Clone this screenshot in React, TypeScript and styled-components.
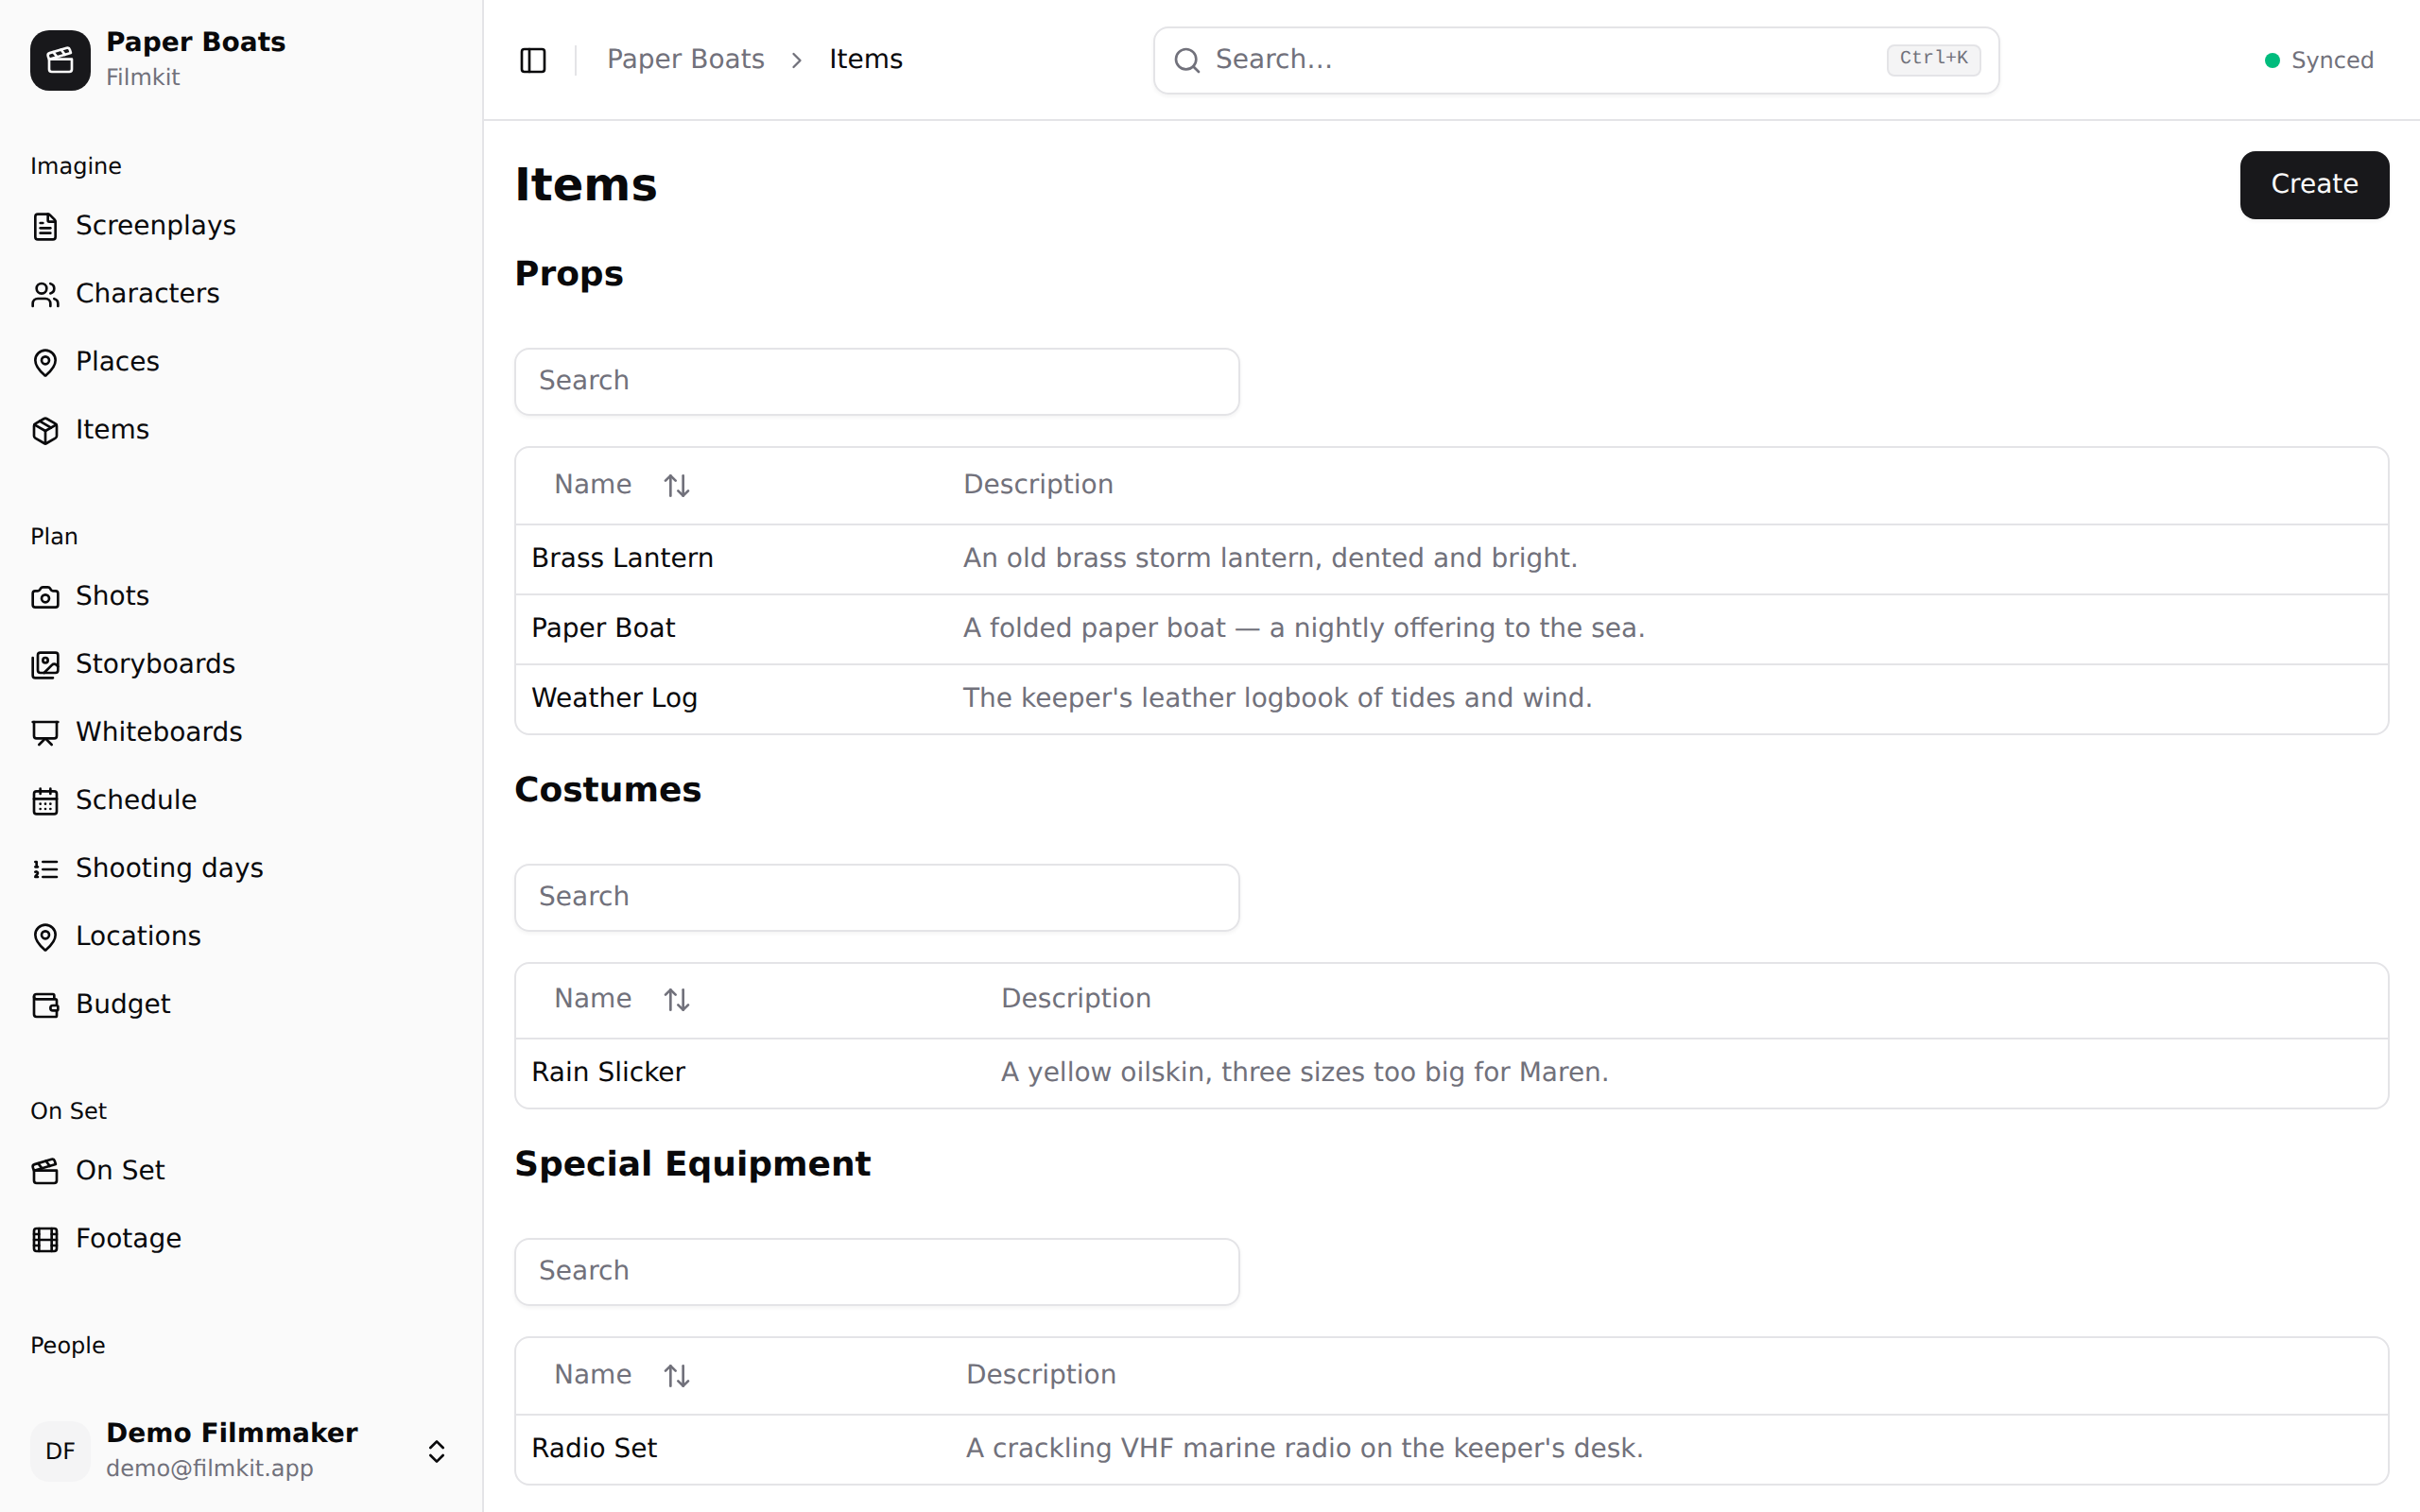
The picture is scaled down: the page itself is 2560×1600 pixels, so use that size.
import React from "react";
import styled, { createGlobalStyle } from "styled-components";
import {
  ArrowUpDown, CalendarDays, Camera, ChevronRight, ChevronsUpDown, Clapperboard,
  FileText, Film, MapPin, Package, PanelLeft, Presentation, Search, Users, Wallet,
} from "lucide-react";

const color = {
  ink: "#09090b",
  muted: "#71717b",
  line: "#e4e4e7",
  soft: "#f4f4f5",
  sidebar: "#fafafa",
  primary: "#18181b",
  green: "#00bc7d",
};

const GlobalStyle = createGlobalStyle`
  *, *::before, *::after { box-sizing: border-box; }
  body {
    margin: 0;
    background: #fff;
    color: ${color.ink};
    font-family: "DejaVu Sans", sans-serif;
    font-size: 28px;
    text-rendering: geometricPrecision;
    overflow: hidden;
  }
  h1, h2, p { margin: 0; }
`;

const Shell = styled.div`
  display: flex;
  width: 100%;
  height: 1600px;
`;

const Sidebar = styled.aside`
  display: flex;
  flex-direction: column;
  flex: 0 0 512px;
  background: ${color.sidebar};
  border-right: 2px solid ${color.line};
`;

const Text = styled.span<{ $muted?: boolean; $bold?: boolean }>`
  line-height: 33px;
  padding-bottom: 3px;
  white-space: nowrap;
  color: ${(p) => (p.$muted ? color.muted : "inherit")};
  font-weight: ${(p) => (p.$bold ? 700 : 400)};
`;

const SmallText = styled.span<{ $muted?: boolean }>`
  font-size: 24px;
  line-height: 28px;
  white-space: nowrap;
  color: ${(p) => (p.$muted ? color.muted : "inherit")};
`;

const ProfileBar = styled.div`
  flex: none;
  display: flex;
  align-items: center;
  gap: 16px;
  height: 128px;
  padding: 0 32px;
`;

const Badge = styled.div<{ $dark?: boolean }>`
  flex: none;
  display: grid;
  place-items: center;
  width: 64px;
  height: 64px;
  border-radius: 20px;
  background: ${(p) => (p.$dark ? color.primary : color.soft)};
  color: ${(p) => (p.$dark ? color.sidebar : color.ink)};
`;

const ProfileText = styled.div`
  flex: 1;
  display: flex;
  flex-direction: column;
  gap: 4px;
  padding-bottom: 4px;
`;

const Nav = styled.nav`
  flex: 1;
  min-height: 0;
  overflow: hidden;
  display: flex;
  flex-direction: column;
  gap: 16px;
`;

const NavGroup = styled.section`
  flex: none;
  display: flex;
  flex-direction: column;
  padding: 16px;
`;

const NavLabel = styled.div`
  display: flex;
  align-items: center;
  height: 64px;
  padding: 0 16px;
`;

const NavList = styled.div`
  display: flex;
  flex-direction: column;
  gap: 8px;
`;

const NavItem = styled.a`
  display: flex;
  align-items: center;
  gap: 16px;
  height: 64px;
  padding: 0 16px;
`;

const Main = styled.main`
  flex: 1;
  min-width: 0;
  display: flex;
  flex-direction: column;
`;

const TopBar = styled.header`
  flex: none;
  display: flex;
  align-items: center;
  height: 128px;
  padding: 2px 48px 0 36px;
  border-bottom: 2px solid ${color.line};
`;

const Divider = styled.div`
  width: 2px;
  height: 32px;
  margin: 0 32px 0 28px;
  background: ${color.line};
`;

const Crumbs = styled.div`
  flex: 1;
  display: flex;
  align-items: center;
  gap: 20px;
`;

const SearchBox = styled.div`
  flex: none;
  display: flex;
  align-items: center;
  gap: 14px;
  width: 896px;
  height: 72px;
  padding: 0 18px;
  border: 2px solid ${color.line};
  border-radius: 16px;
  box-shadow: 0 2px 4px rgba(0, 0, 0, 0.05);
  color: ${color.muted};
`;

const Grow = styled.div`
  flex: 1;
  display: flex;
`;

const Kbd = styled.kbd`
  height: 34px;
  padding: 2px 12px 0;
  border: 2px solid ${color.line};
  border-radius: 8px;
  background: ${color.soft};
  font: 20px/23px "Liberation Mono", monospace;
`;

const Status = styled.div`
  display: flex;
  align-items: center;
  justify-content: flex-end;
  gap: 12px;
  width: 396px;
`;

const Dot = styled.i`
  width: 16px;
  height: 16px;
  border-radius: 50%;
  background: ${color.green};
`;

const Content = styled.div`
  display: flex;
  flex-direction: column;
  padding: 32px;
`;

const TitleRow = styled.div`
  display: flex;
  align-items: center;
  justify-content: space-between;
`;

const Title = styled.h1`
  font-size: 48px;
  line-height: 56px;
`;

const CreateButton = styled.div`
  display: flex;
  align-items: center;
  justify-content: center;
  width: 158px;
  height: 72px;
  border-radius: 16px;
  background: ${color.primary};
  color: ${color.sidebar};
  box-shadow: 0 2px 4px rgba(0, 0, 0, 0.05);
`;

const SectionTitle = styled.h2`
  padding: 38px 0 56px;
  font-size: 36px;
  line-height: 42px;
`;

const FilterInput = styled.div`
  display: flex;
  align-items: center;
  width: 768px;
  height: 72px;
  margin-bottom: 32px;
  padding: 0 24px;
  border: 2px solid ${color.line};
  border-radius: 16px;
  box-shadow: 0 2px 4px rgba(0, 0, 0, 0.05);
`;

const Table = styled.div`
  border: 2px solid ${color.line};
  border-radius: 16px;
`;

const Row = styled.div<{ $nameWidth: number }>`
  display: grid;
  grid-template-columns: ${(p) => p.$nameWidth}px 1fr;
  border-bottom: 2px solid ${color.line};
  &:last-child { border-bottom: 0; }
`;

const Cell = styled.div`
  display: flex;
  align-items: center;
  height: 72px;
  padding: 0 16px;
`;

const HeadCell = styled(Cell)<{ $compact?: boolean }>`
  height: ${(p) => (p.$compact ? 78 : 80)}px;
  padding-bottom: ${(p) => (p.$compact ? 2 : 0)}px;
  color: ${color.muted};
`;

const SortButton = styled.div`
  display: flex;
  align-items: center;
  gap: 31px;
  padding: 0 24px;
`;

const Stroke = ({ children }: { children: React.ReactNode }) => (
  <svg width="32" height="32" viewBox="0 0 24 24" fill="none" stroke="currentColor"
    strokeWidth="2" strokeLinecap="round" strokeLinejoin="round">{children}</svg>
);

const ImagesIcon = () => (
  <Stroke>
    <path d="M18 22H4a2 2 0 0 1-2-2V6" />
    <path d="m22 13-1.296-1.296a2.41 2.41 0 0 0-3.408 0L11 18" />
    <circle cx="12" cy="8" r="2" />
    <rect width="16" height="16" x="6" y="2" rx="2" />
  </Stroke>
);

const ListOrderedIcon = () => (
  <Stroke>
    <path d="M10 12h11M10 18h11M10 6h11M4 10h2M4 6h1v4" />
    <path d="M6 18H4c0-1 2-2 2-3s-1-1.5-2-1" />
  </Stroke>
);

const nav = [
  { label: "Imagine", items: [["Screenplays", FileText], ["Characters", Users], ["Places", MapPin], ["Items", Package]] },
  { label: "Plan", items: [["Shots", Camera], ["Storyboards", ImagesIcon], ["Whiteboards", Presentation], ["Schedule", CalendarDays], ["Shooting days", ListOrderedIcon], ["Locations", MapPin], ["Budget", Wallet]] },
  { label: "On Set", items: [["On Set", Clapperboard], ["Footage", Film]] },
  { label: "People", items: [] },
] as { label: string; items: [string, React.ComponentType<{ size?: number }>][] }[];

const sections = [
  {
    title: "Props", nameWidth: 457, compact: false,
    rows: [
      ["Brass Lantern", "An old brass storm lantern, dented and bright."],
      ["Paper Boat", "A folded paper boat — a nightly offering to the sea."],
      ["Weather Log", "The keeper's leather logbook of tides and wind."],
    ],
  },
  { title: "Costumes", nameWidth: 497, compact: true, rows: [["Rain Slicker", "A yellow oilskin, three sizes too big for Maren."]] },
  { title: "Special Equipment", nameWidth: 460, compact: false, rows: [["Radio Set", "A crackling VHF marine radio on the keeper's desk."]] },
];

export default function App() {
  return (
    <Shell>
      <GlobalStyle />
      <Sidebar>
        <ProfileBar>
          <Badge $dark><Clapperboard size={32} /></Badge>
          <ProfileText>
            <Text $bold>Paper Boats</Text>
            <SmallText $muted>Filmkit</SmallText>
          </ProfileText>
        </ProfileBar>
        <Nav>
          {nav.map((group) => (
            <NavGroup key={group.label}>
              <NavLabel><SmallText>{group.label}</SmallText></NavLabel>
              <NavList>
                {group.items.map(([name, Icon]) => (
                  <NavItem key={name}><Icon size={32} /><Text>{name}</Text></NavItem>
                ))}
              </NavList>
            </NavGroup>
          ))}
        </Nav>
        <ProfileBar>
          <Badge><SmallText>DF</SmallText></Badge>
          <ProfileText>
            <Text $bold>Demo Filmmaker</Text>
            <SmallText $muted>demo@filmkit.app</SmallText>
          </ProfileText>
          <ChevronsUpDown size={32} />
        </ProfileBar>
      </Sidebar>
      <Main>
        <TopBar>
          <PanelLeft size={32} />
          <Divider />
          <Crumbs>
            <Text $muted>Paper Boats</Text>
            <ChevronRight size={28} color={color.muted} />
            <Text>Items</Text>
          </Crumbs>
          <SearchBox>
            <Search size={32} />
            <Grow><Text>Search…</Text></Grow>
            <Kbd>Ctrl+K</Kbd>
          </SearchBox>
          <Status><Dot /><SmallText $muted>Synced</SmallText></Status>
        </TopBar>
        <Content>
          <TitleRow>
            <Title>Items</Title>
            <CreateButton><Text>Create</Text></CreateButton>
          </TitleRow>
          {sections.map((s) => (
            <section key={s.title}>
              <SectionTitle>{s.title}</SectionTitle>
              <FilterInput><Text $muted>Search</Text></FilterInput>
              <Table>
                <Row $nameWidth={s.nameWidth}>
                  <HeadCell $compact={s.compact}>
                    <SortButton><Text>Name</Text><ArrowUpDown size={32} /></SortButton>
                  </HeadCell>
                  <HeadCell $compact={s.compact}><Text>Description</Text></HeadCell>
                </Row>
                {s.rows.map(([name, description]) => (
                  <Row key={name} $nameWidth={s.nameWidth}>
                    <Cell><Text>{name}</Text></Cell>
                    <Cell><Text $muted>{description}</Text></Cell>
                  </Row>
                ))}
              </Table>
            </section>
          ))}
        </Content>
      </Main>
    </Shell>
  );
}
